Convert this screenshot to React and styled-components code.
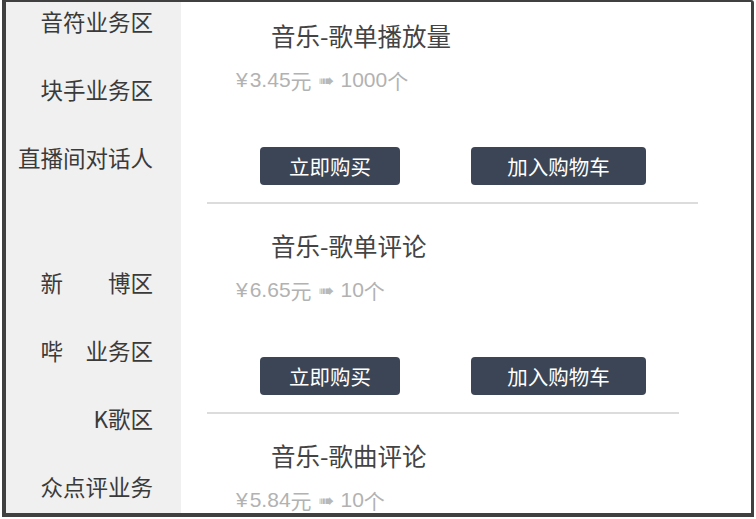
import { styled, createGlobalStyle } from "styled-components";

const GlobalStyle = createGlobalStyle`
    html, body {
        margin: 0;
        padding: 0;
        background: #ffffff;
    }
    body {
        font-family: "Noto Sans CJK SC", "Liberation Sans", sans-serif;
    }
`;

const categories = [
    { label: "音符业务区" },
    { label: "块手业务区" },
    { label: "直播间对话人" },
    { label: "新　　博区", gap: 95 },
    { label: "哔　业务区" },
    { label: "K歌区" },
    { label: "众点评业务" },
];

// the last product is cut off by the frame, only its title and price show
const products = [
    { title: "音乐-歌单播放量", price: "3.45", amount: "1000", divider: 491, actions: true },
    { title: "音乐-歌单评论", price: "6.65", amount: "10", divider: 472, actions: true },
    { title: "音乐-歌曲评论", price: "5.84", amount: "10", divider: 472, actions: false },
];

export default function App() {
    return (
        <>
            <GlobalStyle />
            <Frame>
                <Sidebar>
                    {categories.map((c) => (
                        <Category key={c.label} $gap={c.gap}>{c.label}</Category>
                    ))}
                </Sidebar>
                <ProductList>
                    {products.map((p) => (
                        <Product key={p.title}>
                            <Title>{p.title}</Title>
                            <Price>
                                <span className="yen">¥</span>
                                <span className="num">{p.price}</span>元
                                <span className="arrow">➠</span>
                                <span className="num">{p.amount}</span>个
                            </Price>
                            {p.actions && (
                                <>
                                    <Actions>
                                        <ActionButton $width={140}>立即购买</ActionButton>
                                        <ActionButton $width={175}>加入购物车</ActionButton>
                                    </Actions>
                                    <Divider $width={p.divider} />
                                </>
                            )}
                        </Product>
                    ))}
                </ProductList>
            </Frame>
        </>
    );
}

const Frame = styled.div`
    margin: 0 0 0 2px;
    width: 752px;
    height: 517px;
    box-sizing: border-box;
    border-style: solid;
    border-color: #404040;
    border-width: 2px 3px 4px 4px;
    border-top-right-radius: 3px;
    display: flex;
    overflow: hidden;
    background: #ffffff;
`;

const Sidebar = styled.div`
    width: 175px;
    flex-shrink: 0;
    background: #f0f0f0;
    padding: 4px 28px 0 0;
    box-sizing: border-box;
    display: flex;
    flex-direction: column;
    align-items: flex-end;
`;

const Category = styled.div`
    font-size: 22.5px;
    line-height: 30px;
    height: 30px;
    color: #3a3a3a;
    white-space: pre;
    margin-top: ${(p) => (p.$gap ? p.$gap : 38)}px;

    &:first-child {
        margin-top: 0;
    }
`;

const ProductList = styled.div`
    flex: 1;
    display: flex;
    flex-direction: column;
`;

const Product = styled.div`
    padding: 18px 0 8px 0;
    flex-shrink: 0;
`;

const Title = styled.div`
    margin-left: 90px;
    font-size: 24.5px;
    line-height: 32px;
    height: 32px;
    color: #444444;
`;

const Price = styled.div`
    margin: 16px 0 0 55px;
    font-size: 21px;
    line-height: 24px;
    height: 24px;
    color: #b2b2b2;
    display: flex;
    align-items: center;

    .yen {
        font-family: "Liberation Sans", sans-serif;
        margin-right: 2px;
    }

    .num {
        font-family: "Liberation Sans", sans-serif;
    }

    .arrow {
        font-family: "DejaVu Sans", sans-serif;
        font-size: 19px;
        margin: 0 6px 0 7px;
        color: #b8b8b8;
    }
`;

const Actions = styled.div`
    margin: 55px 0 0 79px;
    display: flex;
    gap: 71px;
`;

const ActionButton = styled.button`
    width: ${(p) => p.$width}px;
    height: 38px;
    border: none;
    border-radius: 4px;
    background: #3c4556;
    color: #ffffff;
    font-family: "Noto Sans CJK SC", "Liberation Sans", sans-serif;
    font-size: 20.5px;
    padding: 0;
    cursor: pointer;
`;

const Divider = styled.div`
    margin: 17px 0 0 26px;
    width: ${(p) => p.$width}px;
    height: 2px;
    background: #dcdcdc;
`;
